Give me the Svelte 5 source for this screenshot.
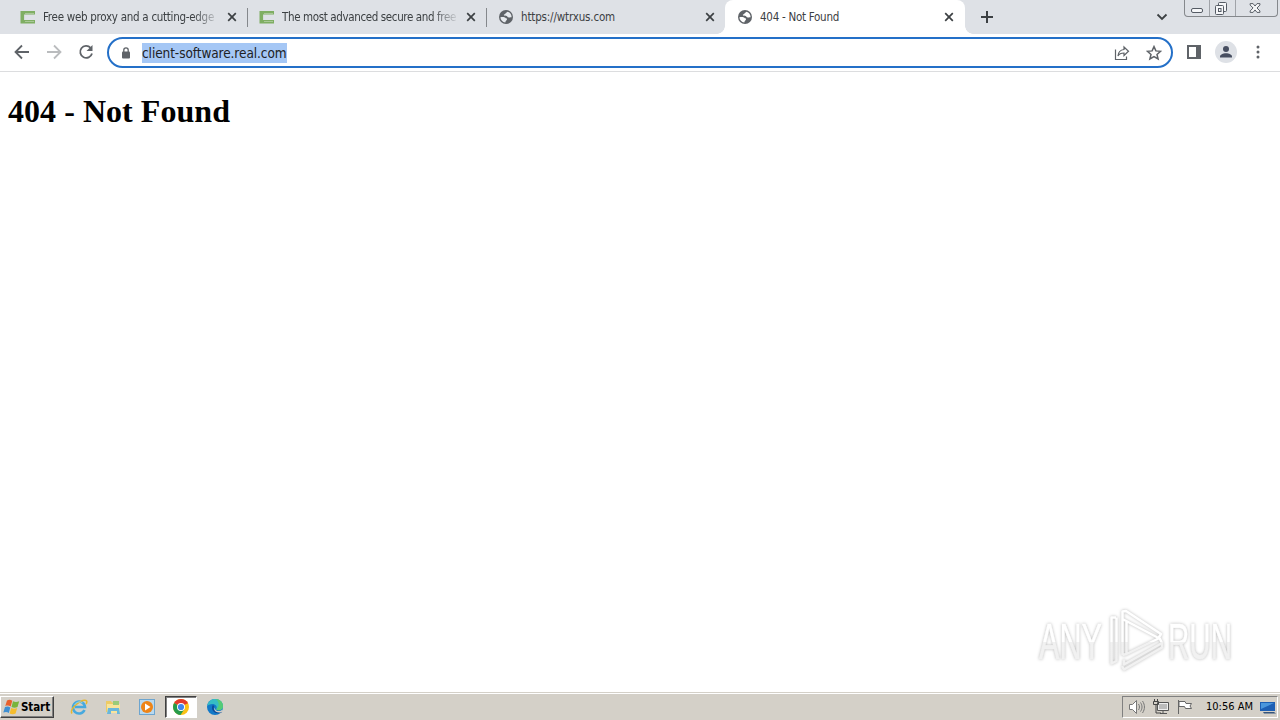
<script>
  const tabs = [
    { title: 'Free web proxy and a cutting-edge', icon: 'proxy', width: 171 },
    { title: 'The most advanced secure and free', icon: 'proxy', width: 174 },
    { title: 'https://wtrxus.com', icon: 'globe', width: 94 },
    { title: '404 - Not Found', icon: 'globe', width: 79, active: true },
  ]

  // Squeeze or stretch a label to a fixed width by spreading its letter gaps.
  function fit(node, width) {
    const natural = node.getBoundingClientRect().width
    node.style.letterSpacing = `${(width - natural) / node.textContent.length}px`
  }
</script>

<div class="screen">
  <header class="tab-strip">
    {#each tabs as tab}
      <div class="tab" class:active={tab.active}>
        {#if tab.icon === 'proxy'}
          <svg class="favicon" viewBox="0 0 16 16">
            <path d="M15 3.800H2.300v9H15" fill="none" stroke="#7fae63" stroke-width="3.600" />
            <path d="M14 4.500H5M14 12.500H5" fill="none" stroke="#a9c897" />
          </svg>
        {:else}
          <svg class="favicon" viewBox="0 0 16 16">
            <circle cx="8" cy="8" r="7" fill="#5f6368" />
            <path d="M2.400 8.200c2-.3 4.300-.4 5 .6.500.8 1.700.3 1.600 1.500 0 1-1.400 1.200-1.700 3.200C4.700 13.200 2.500 11 2.400 8.200zM9.500 2.700c-.6 1-2 .9-2 1.700 0 .9-1.800.6-1.700 1.700.2 1 2 .4 3 .9.900.4.7 1.500 2 1.500 1 0 1.700-.6 2.800-.2C13.700 5.500 12 3.300 9.500 2.700z" fill={tab.active ? '#fff' : '#e6e9ed'} />
          </svg>
        {/if}
        <div class="tab-title" class:fade={tab.icon === 'proxy'}>
          <span use:fit={tab.width}>{tab.title}</span>
        </div>
        <svg class="close" viewBox="0 0 10 10"><path d="M1.200 1.200l7.600 7.600M8.800 1.200L1.200 8.800" /></svg>
      </div>
    {/each}
    <svg class="new-tab" viewBox="0 0 12 12"><path d="M6 0v12M0 6h12" /></svg>
    <svg class="tab-search" viewBox="0 0 12 8"><path d="M1.500 1.500L6 6l4.500-4.500" /></svg>
    <div class="window-buttons">
      <svg width="24" height="16" viewBox="0 0 24 16"><rect x="6.500" y="8.500" width="11" height="4" rx="1.500" /></svg>
      <svg width="25" height="16" viewBox="0 0 25 16">
        <rect x="8.500" y="2.500" width="8" height="9" rx="1" />
        <rect x="5.500" y="5.500" width="8" height="9" rx="1" />
        <rect x="8.500" y="8.500" width="2.500" height="3" />
      </svg>
      <svg width="42" height="16" viewBox="0 0 42 16"><path d="M14.500 3.500h3l2 2.500 2-2.500h3v1.500L21.500 8l3 3v1.500h-3l-2-2.500-2 2.500h-3V11l3-3-3-3z" /></svg>
    </div>
  </header>

  <nav class="toolbar">
    <svg class="nav-icon" viewBox="0 0 16 16"><path d="M15 8H2M8 1.500L1.500 8 8 14.500" stroke="#5f6368" /></svg>
    <svg class="nav-icon" viewBox="0 0 16 16"><path d="M1 8h13M8 1.500L14.500 8 8 14.500" stroke="#babcbe" /></svg>
    <svg class="nav-icon" viewBox="0 0 16 16">
      <path d="M12.600 3.800A6 6 0 1 0 14 9.500" stroke="#5f6368" />
      <path d="M14.500 1v6h-6z" fill="#5f6368" />
    </svg>

    <div class="address">
      <svg class="lock" viewBox="0 0 10 12">
        <rect x="1" y="4.500" width="8" height="7" rx="1" fill="#5f6368" />
        <path d="M2.800 5V3a2.200 2.200 0 0 1 4.400 0v2" fill="none" stroke="#5f6368" stroke-width="1.300" />
      </svg>
      <span class="url" use:fit={144.500}>client-software.real.com</span>
      <svg class="share" viewBox="0 0 16 16">
        <path d="M1.500 4.500v10h11v-3" />
        <path d="M10 2l4.500 4.200L10 10.500V8C7 8 5 9 4 11c.2-3.500 2-6 6-6.500z" />
      </svg>
      <svg class="star" viewBox="0 0 16 16">
        <path d="M8 1.600l1.900 4.300 4.700.4-3.600 3.100 1.100 4.600L8 11.600 3.900 14 5 9.400 1.400 6.300l4.700-.4z" />
      </svg>
    </div>

    <svg class="panel" viewBox="0 0 14 14">
      <rect x="1" y="1" width="12" height="12" fill="#fff" stroke="#5f6368" stroke-width="2" />
      <rect x="9" y="1" width="4" height="12" fill="#5f6368" />
    </svg>
    <svg class="avatar" viewBox="0 0 22 22">
      <circle cx="11" cy="11" r="11" fill="#dee1e6" />
      <circle cx="11" cy="8" r="3" fill="#474e60" />
      <path d="M5 16.500v-1c0-2 3-3.300 6-3.300s6 1.300 6 3.300v1z" fill="#474e60" />
    </svg>
    <svg class="more" viewBox="0 0 4 14">
      <circle cx="2" cy="2" r="1.500" /><circle cx="2" cy="7" r="1.500" /><circle cx="2" cy="12" r="1.500" />
    </svg>
  </nav>

  <main>
    <h1><span use:fit={222}>404 - Not Found</span></h1>

    <svg class="watermark" viewBox="0 0 220 80">
      <defs>
        <linearGradient id="shine" x1="0" y1="0" x2="0" y2="80" gradientUnits="userSpaceOnUse">
          <stop offset="0.52" stop-color="#fff" />
          <stop offset="0.52" stop-color="#f1f1f1" />
        </linearGradient>
      </defs>
      <g class="mark">
        <text x="9" y="59" textLength="63" lengthAdjust="spacingAndGlyphs">ANY</text>
        <text x="138" y="59" textLength="64" lengthAdjust="spacingAndGlyphs">RUN</text>
        <path d="M86 17.500h-4.500v46l5-2.500V17.500M92.500 11.500l3.500-.5 35 23-2.500 4-36-19zM92.500 12v43M96.500 21v33M92.500 55l4-1 33-16 2.500 5-38 21.500v-5M92 66l2 3.500 38-22V42" />
      </g>
    </svg>
  </main>

  <footer class="taskbar">
    <div class="start">
      <svg width="18" height="16" viewBox="0 0 18 16">
        <path d="M4 1.500c2-1.300 3.500-1 5.300.2L7.700 7.500C6 6.400 4.500 6.200 2.300 7z" fill="#e8602c" />
        <path d="M10 2.300c2 1.100 4 1 6.200 0L14.500 8c-2 1-4 1-6 0z" fill="#79b43c" />
        <path d="M2 8c2-.9 3.700-.7 5.300.4L5.800 14c-1.500-1.100-3.300-1.200-5.500-.4z" fill="#3f8fd2" />
        <path d="M8.200 9c2 1 4 1 6 0l-1.600 5.500c-2 1-4 1-6 0z" fill="#f5bd2e" />
      </svg>
      <span use:fit={29}>Start</span>
    </div>

    <div class="launchers">
      <div class="launcher">
        <svg viewBox="0 0 18 18">
          <path d="M14.500 12A6 6 0 1 1 15 9H5" fill="none" stroke="#47a9de" stroke-width="2.600" />
          <path d="M2 15.500C-1 11 11 1 16 2.500c1.500.5.7 2.600 0 3.500" fill="none" stroke="#e7b72e" stroke-width="1.500" />
          <path d="M4.500 7a5.500 5.500 0 0 1 8-2.200" fill="none" stroke="#87d2ef" />
        </svg>
      </div>
      <div class="launcher">
        <svg viewBox="0 0 18 18">
          <path d="M2 3h5l1 1.500h7V14H2z" fill="#edcb65" />
          <path d="M3 6h13v9H3z" fill="#f8e49b" />
          <path d="M9 3h6v4H9z" fill="#9acb79" />
          <path d="M4 10h11l1 6h-3v-3H7v3H3z" fill="#69b7dc" />
        </svg>
      </div>
      <div class="launcher">
        <svg viewBox="0 0 18 18">
          <rect x="1.500" y="1.500" width="15" height="15" fill="#b9d9ef" stroke="#6da5cf" />
          <circle cx="9" cy="9" r="6" fill="#ee8417" />
          <path d="M7 5.500l5.500 3.500L7 12.500z" fill="#fff" />
        </svg>
      </div>
      <div class="launcher pressed">
        <svg viewBox="0 0 18 18">
          <circle cx="9" cy="9" r="8" fill="#fbc116" />
          <path d="M9 9L2.100 5A8 8 0 0 1 15.900 5z" fill="#e33b2e" />
          <path d="M9 9L2.100 5A8 8 0 0 0 8.500 17L12.500 11z" fill="#269b4b" />
          <path d="M8 5.300h8.100A8 8 0 0 0 15.900 5L9 4z" fill="#e33b2e" />
          <circle cx="9" cy="9" r="4" fill="#fff" />
          <circle cx="9" cy="9" r="3.100" fill="#4086ed" />
        </svg>
      </div>
      <div class="launcher">
        <svg viewBox="0 0 18 18">
          <circle cx="9" cy="9" r="8" fill="#1279c8" />
          <path d="M1.200 8C2 3.500 5.300 1 9 1c4.800 0 8 3.300 8 7 0 3-2.200 4.200-4.500 4.200-2 0-2.700-.8-2-1.700C11.400 8.500 9.500 6 6.500 6 4 6 2 7 1.200 8z" fill="#36bdc4" />
          <path d="M10 1.100c4.200.4 7 3.400 7 6.900 0 3-2.200 4.200-4.500 4.200-1.500 0-2.400-.6-2-1.400C13 9 14 5 10 1.100z" fill="#55cb77" />
          <path d="M7.500 7.500c-2 3.500.8 7.500 5 7 1.500-.1 2.600-.7 3.200-1.200" fill="none" stroke="#0e4b98" stroke-width="1.600" />
          <path d="M9.500 8.700c-1.500 2.300.5 4.200 3 4.300 1.500 0 3-.6 3.500-1l.5 1-1 1.200c-3 1-7-.2-7.300-3.200z" fill="#d4d0c8" />
        </svg>
      </div>
    </div>

    <div class="tray">
      <svg width="18" height="18" viewBox="0 0 18 18">
        <path d="M1.500 6.500h3l4-4v13l-4-4h-3z" fill="#fff" stroke="#777" />
        <path d="M10.500 6c1.300 2 1.300 4 0 6M12.500 4.500c2 3 2 6 0 9M14.500 3c2.600 4 2.600 8 0 12" fill="none" stroke="#777" />
      </svg>
      <svg width="18" height="18" viewBox="0 0 18 18">
        <path d="M5.500 4.500h11v8h-11zM8 15.500h7M11 13v2" fill="#eee" stroke="#555" />
        <path d="M7 6h8v5H7z" fill="#bbb" />
        <path d="M2.500 1v3M5.500 1v3M1.500 3.500h5v3h-5zM4 7v8h5" fill="none" stroke="#444" />
      </svg>
      <svg width="18" height="18" viewBox="0 0 18 18">
        <path d="M2.500 2v14" stroke="#666" />
        <path d="M3 3.500h6l1 2h5.500L14 8l1.500 2.500h-6l-1-2H3z" fill="#fff" stroke="#666" />
      </svg>
      <span class="clock"><span use:fit={47}>10:56 AM</span></span>
      <svg width="18" height="16" viewBox="0 0 18 16">
        <path d="M1 3h15v9H1z" fill="#1d5fb4" />
        <path d="M2 4h13L2 10z" fill="#4a96dc" />
        <path d="M4 13h11l2 1.500H5z" fill="#34547c" />
      </svg>
    </div>
  </footer>
</div>

<style>
  :global(body) { overflow: hidden; }

  .screen {
    display: flex;
    flex-direction: column;
    width: 1280px;
    height: 720px;
    background: #fff;
    color: #000;
    font-family: "DejaVu Sans Condensed", "DejaVu Sans", sans-serif;
    font-stretch: condensed;
  }

  svg { display: block; flex-shrink: 0; }

  span { white-space: nowrap; }

  /* ── Tabs ── */

  .tab-strip {
    display: flex;
    box-sizing: border-box;
    height: 34px;
    padding: 0 2px 0 8px;
    background: #dee1e6;
  }

  .tab {
    position: relative;
    display: flex;
    align-items: center;
    box-sizing: border-box;
    width: 239px;
    height: 34px;
    padding: 0 10px 0 12px;
    color: #3c4043;
  }

  .tab:not(.active):not(:nth-child(3))::after {
    content: "";
    position: absolute;
    right: -1px;
    top: 8px;
    width: 1px;
    height: 19px;
    background: #85888c;
  }

  .tab.active {
    width: 240px;
    padding-right: 11px;
    border-radius: 8px 8px 0 0;
    background: #fff;
  }

  /* Concave feet where the active tab meets the toolbar. */
  .tab.active::before,
  .tab.active::after {
    content: "";
    position: absolute;
    bottom: 0;
    width: 8px;
    height: 8px;
  }

  .tab.active::before {
    left: -8px;
    background: radial-gradient(circle at 0 0, transparent 7.5px, #fff 8px);
  }

  .tab.active::after {
    right: -8px;
    background: radial-gradient(circle at 100% 0, transparent 7.5px, #fff 8px);
  }

  .favicon { width: 16px; height: 16px; }

  .tab-title {
    flex: 1;
    margin-left: 7px;
    overflow: hidden;
    font-size: 11.500px;
    line-height: 16px;
  }

  .fade {
    mask-image: linear-gradient(to right, #000 150px, transparent 178px);
  }

  .close {
    width: 10px;
    height: 10px;
    fill: none;
    stroke: #3c4043;
    stroke-width: 1.700;
  }

  .new-tab {
    width: 12px;
    height: 12px;
    margin: 11px 0 0 16px;
    stroke: #3c4043;
    stroke-width: 2;
  }

  .tab-search {
    width: 12px;
    height: 8px;
    margin: 13px 16px 0 auto;
    fill: none;
    stroke: #3c4043;
    stroke-width: 1.800;
  }

  .window-buttons {
    display: flex;
    box-sizing: border-box;
    height: 17px;
    border: 1px solid #85888c;
    border-top: 0;
    border-radius: 0 0 4px 4px;
    fill: #f5f6f8;
    stroke: #555b64;
  }

  .window-buttons svg + svg { border-left: 1px solid #a0a3a8; }

  .window-buttons svg:last-child { width: 41px; }

  /* ── Toolbar ── */

  .toolbar {
    display: flex;
    align-items: center;
    box-sizing: border-box;
    height: 38px;
    padding: 0 20px 2px 14px;
    border-bottom: 1px solid #dcdddf;
  }

  .nav-icon {
    width: 16px;
    height: 16px;
    margin-right: 16px;
    fill: none;
    stroke-width: 1.800;
  }

  .address {
    display: flex;
    align-items: center;
    box-sizing: border-box;
    width: 1066px;
    height: 31px;
    margin: 2px 14px 0 -3px;
    padding: 0 9px 0 12px;
    border: 2px solid #2470c8;
    border-radius: 16px;
  }

  .lock { width: 10px; height: 12px; }

  .url {
    margin: 0 auto 0 11px;
    background: #a5c7f5;
    color: #202124;
    font-size: 13.500px;
    line-height: 20px;
  }

  .share,
  .star {
    width: 16px;
    height: 16px;
    fill: none;
    stroke: #5f6368;
    stroke-width: 1.200;
  }

  .star { margin-left: 16px; stroke-width: 1.500; }
  .panel { width: 14px; height: 14px; }
  .avatar { width: 22px; height: 22px; margin-left: 14px; }
  .more { width: 4px; height: 14px; margin-left: 19px; fill: #5f6368; }

  /* ── Page ── */

  main {
    position: relative;
    flex: 1;
    padding: 0 8px;
  }

  h1 {
    margin: 21px 0;
    font: bold 32px/37px "Liberation Serif", serif;
  }

  .watermark {
    position: absolute;
    left: 1030px;
    top: 528px;
    width: 220px;
    height: 80px;
    overflow: visible;
  }

  .mark {
    fill: url(#shine);
    filter: drop-shadow(0 0 1.500px rgba(0, 0, 0, 0.28));
  }

  .mark text {
    font: 50px "Liberation Sans", sans-serif;
    stroke: url(#shine);
    stroke-width: 0.500;
  }

  .mark path {
    fill: none;
    stroke: url(#shine);
    stroke-width: 2.500;
    stroke-linejoin: round;
  }

  /* ── Taskbar ── */

  .taskbar {
    display: flex;
    align-items: center;
    box-sizing: border-box;
    height: 28px;
    padding: 0 2px 0 0;
    border-top: 1px solid #d4d0c8;
    background: #d4d0c8;
    box-shadow: inset 0 1px #fff;
  }

  .start {
    display: flex;
    align-items: center;
    box-sizing: border-box;
    width: 54px;
    height: 22px;
    border: 1px solid;
    border-color: #fff #404040 #404040 #fff;
    box-shadow: inset -1px -1px #808080;
    padding-left: 2px;
    font-size: 11.500px;
    font-weight: bold;
  }

  .launchers { display: flex; margin-left: 9px; }

  .launcher {
    display: flex;
    align-items: center;
    justify-content: center;
    box-sizing: border-box;
    width: 32px;
    height: 22px;
    margin-right: 2px;
    border: 1px solid transparent;
  }

  .launcher svg { width: 18px; height: 18px; }

  .pressed {
    border-color: #404040 #fff #fff #404040;
    background: #fff;
    box-shadow: inset 1px 1px #808080;
  }

  .tray {
    display: flex;
    align-items: center;
    box-sizing: border-box;
    width: 156px;
    height: 22px;
    margin-left: auto;
    padding: 0 0 0 5px;
    border: 1px solid;
    border-color: #808080 #fff #fff #808080;
  }

  .tray svg + svg { margin-left: 6px; }

  .clock {
    width: 47px;
    margin: 0 6px 0 auto;
    font-size: 11px;
  }
</style>
